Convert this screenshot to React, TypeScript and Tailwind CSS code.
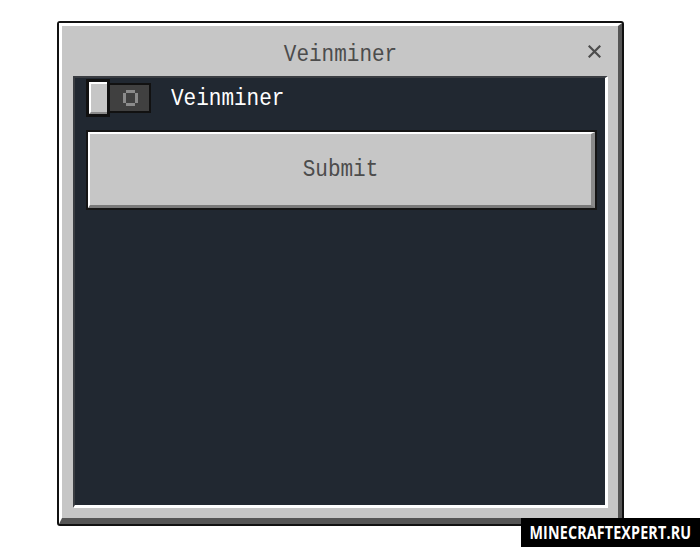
import React, { useState } from 'react';

const mono = { fontFamily: '"Liberation Mono", "DejaVu Sans Mono", monospace' };

function ToggleIcon() {
  // the little "O" glyph drawn inside the switch track
  return (
    <svg width="15" height="16" viewBox="0 0 15 16" className="block shrink-0">
      <path
        d="M3 0H12V3H3Z M3 13H12V16H3Z M0 3H3V13H0Z M12 3H15V13H12Z"
        fill="#8b8b8b"
      />
    </svg>
  );
}

function CloseIcon() {
  return (
    <svg width="13" height="13" viewBox="0 0 13 13" className="block">
      <path d="M1.5 1.5L11.5 11.5M11.5 1.5L1.5 11.5" stroke="#4c4c4c" strokeWidth="2.2" strokeLinecap="square" />
    </svg>
  );
}

export default function App() {
  const [on, setOn] = useState(false);

  return (
    <div className="relative h-[547px] w-[700px] overflow-hidden bg-white">
      <div className="pl-[57px] pt-[21px]">
        <div className="h-[505px] w-[567px] rounded-[3px] border-2 border-[#111111] bg-[#c6c6c6]">
          <div className="flex h-full flex-col border-t-[3px] border-l-[3px] border-r-[4px] border-b-[6px] border-t-white border-l-white border-r-[#555555] border-b-[#555555] pl-[11px] pr-[10px] pb-[10px]">
            {/* title bar */}
            <div className="relative flex h-[50px] shrink-0 items-center justify-center pt-[6px]">
              <span className="inline-block scale-y-[1.15] text-[21px] leading-none text-[#4c4c4c]" style={mono}>
                Veinminer
              </span>
              <button className="absolute right-[7px] top-[19px]">
                <CloseIcon />
              </button>
            </div>

            {/* dark content panel */}
            <div className="flex-1 border-t-2 border-l-2 border-r-[3px] border-b-[3px] border-t-[#3a3d42] border-l-[#3a3d42] border-r-white border-b-white bg-[#212831] pl-[11px] pt-[1px]">
              <div className="flex items-center">
                <button className="relative flex h-[38px] items-center" onClick={() => setOn(!on)}>
                  <div className="z-10 h-[38px] w-[24px] border-[3px] border-[#111111] bg-[#c6c6c6]">
                    <div className="h-full border-t-2 border-l-2 border-b-2 border-t-white border-l-white border-b-[#8b8b8b]" />
                  </div>
                  <div className="flex h-[30px] w-[41px] items-center justify-center border-2 border-l-0 border-[#111111] bg-[#404040] pl-[1px]">
                    <ToggleIcon />
                  </div>
                </button>
                <span className="ml-[20px] inline-block scale-y-[1.15] text-[21px] leading-none text-white" style={mono}>
                  Veinminer
                </span>
              </div>

              <button className="mt-[13px] flex h-[80px] w-[511px] border-2 border-[#151515] bg-[#c6c6c6]">
                <div className="flex h-full w-full items-center justify-center border-t-2 border-l-2 border-r-[4px] border-b-[3px] border-t-white border-l-white border-r-[#8a8a8a] border-b-[#7a7a7a]">
                  <span className="inline-block scale-y-[1.15] text-[21px] leading-none text-[#4c4c4c]" style={mono}>
                    Submit
                  </span>
                </div>
              </button>
            </div>
          </div>
        </div>
      </div>

      {/* watermark */}
      <div className="absolute bottom-0 right-0 flex h-[29px] w-[179px] items-center justify-center bg-black">
        <span
          className="inline-block scale-x-[0.84] text-[17px] font-bold tracking-[0.2px] whitespace-nowrap text-white"
          style={{ fontFamily: '"Open Sans", "Liberation Sans", sans-serif' }}
        >
          MINECRAFTEXPERT.RU
        </span>
      </div>
    </div>
  );
}
